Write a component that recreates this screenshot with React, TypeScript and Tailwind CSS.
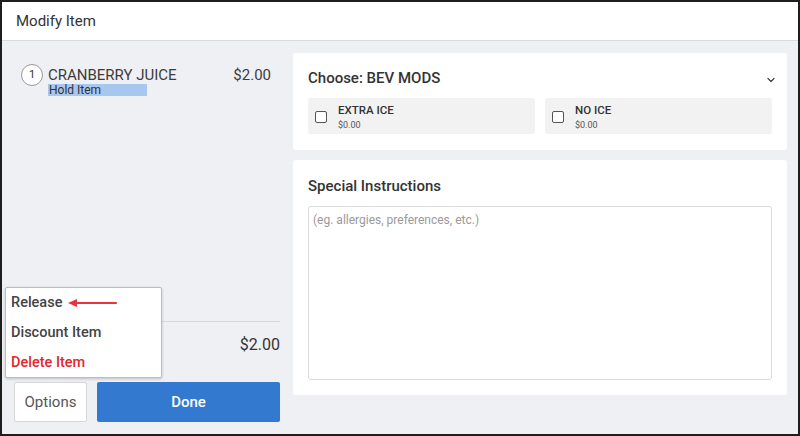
import { ChevronDown } from 'lucide-react';

const font = { fontFamily: 'Roboto, "Liberation Sans", sans-serif' };

function ModOption({ label, price }: { label: string; price: string }) {
  return (
    <div className="flex-1 h-[36px] bg-[#f2f2f2] rounded-[2px] flex items-center pl-[7px] pt-[2px]">
      <div className="w-[12px] h-[12px] border-[1.5px] border-[#555] rounded-[2px] bg-white" />
      <div className="ml-[11px] flex flex-col leading-none pt-[1px]">
        <span className="text-[11.5px] font-medium text-[#333]">{label}</span>
        <span className="text-[9px] text-[#555] mt-[4px]">{price}</span>
      </div>
    </div>
  );
}

export default function App() {
  return (
    <div style={font} className="w-[800px] h-[436px] border-2 border-[#1e1e1e] bg-[#eff0f4] flex flex-col overflow-hidden">
      <div className="h-[39px] shrink-0 bg-white border-b border-[#d9dadd] flex items-center px-[14px]">
        <span className="text-[15px] text-[#333]">Modify Item</span>
      </div>

      <div className="flex-1 flex min-h-0">
        {/* left: order item */}
        <div className="w-[291px] shrink-0 relative flex flex-col pl-[12px] pr-[13px] pb-[12px]">
          <div className="flex items-start pt-[23px] pl-[7px] pr-[9px]">
            <div className="w-[22px] h-[22px] rounded-full border border-[#999] bg-white flex items-center justify-center text-[11px] text-[#333] shrink-0">1</div>
            <div className="ml-[5px] flex-1 flex flex-col pt-[2px]">
              <div className="flex justify-between items-center">
                <span className="text-[15px] text-[#3c3c3c] leading-[18px]">CRANBERRY JUICE</span>
                <span className="text-[15px] text-[#3c3c3c] leading-[18px]">$2.00</span>
              </div>
              <span className="w-[99px] h-[12px] bg-[#a7c7ef] text-[12px] leading-[12px] text-[#333] pl-[1px]">Hold Item</span>
            </div>
          </div>

          <div className="flex-1" />

          <div className="border-t border-[#d6d8dc]" />
          <div className="flex justify-end items-center h-[45px] text-[16px] text-[#333]">$2.00</div>

          <div className="flex gap-[10px] mt-[15px]">
            <button className="w-[73px] h-[40px] bg-white border border-[#d6d6d6] rounded-[2px] text-[15px] text-[#555]">Options</button>
            <button className="flex-1 h-[40px] bg-[#3279cf] rounded-[2px] text-[15px] font-medium text-white">Done</button>
          </div>

          {/* options menu */}
          <div className="absolute left-[3px] top-[246px] w-[157px] h-[91px] bg-white border border-[#bdbdbd] rounded-[2px] shadow-[0_1px_3px_rgba(0,0,0,0.2)] flex flex-col pl-[5px]">
            <div className="h-[30px] shrink-0 flex items-center gap-[6px] text-[14.5px] font-medium text-[#444]">
              Release
              <svg width="50" height="10" viewBox="0 0 50 10">
                <path d="M8 5 H48" stroke="#e8343a" strokeWidth="2.2" strokeLinecap="round" />
                <path d="M0 5 L9 1 L9 9 Z" fill="#e8343a" />
              </svg>
            </div>
            <div className="h-[30px] shrink-0 flex items-center text-[14.5px] font-medium text-[#444]">Discount Item</div>
            <div className="h-[30px] shrink-0 flex items-center text-[14.5px] font-medium text-[#e4262c]">Delete Item</div>
          </div>
        </div>

        {/* right: modifiers */}
        <div className="flex-1 flex flex-col gap-[10px] pt-[12px] pr-[11px] pb-[39px]">
          <div className="bg-white rounded-[3px] px-[15px] pt-[15px] pb-[16px]">
            <div className="flex items-center justify-between h-[20px]">
              <span className="text-[15px] font-medium text-[#333]">Choose: BEV MODS</span>
              <ChevronDown className="w-[12px] h-[12px] text-[#444] mt-[4px] -mr-[5px]" strokeWidth={2.5} />
            </div>
            <div className="flex gap-[10px] mt-[10px]">
              <ModOption label="EXTRA ICE" price="$0.00" />
              <ModOption label="NO ICE" price="$0.00" />
            </div>
          </div>

          <div className="flex-1 bg-white rounded-[3px] px-[15px] pt-[16px] pb-[15px] flex flex-col">
            <span className="text-[15px] font-medium text-[#333] leading-[20px]">Special Instructions</span>
            <textarea
              placeholder="(eg. allergies, preferences, etc.)"
              className="flex-1 mt-[10px] border border-[#dcdcdc] rounded-[3px] resize-none px-[4px] py-[4px] text-[12px] text-[#333] placeholder:text-[#9a9a9a] outline-none"
            />
          </div>
        </div>
      </div>
    </div>
  );
}
